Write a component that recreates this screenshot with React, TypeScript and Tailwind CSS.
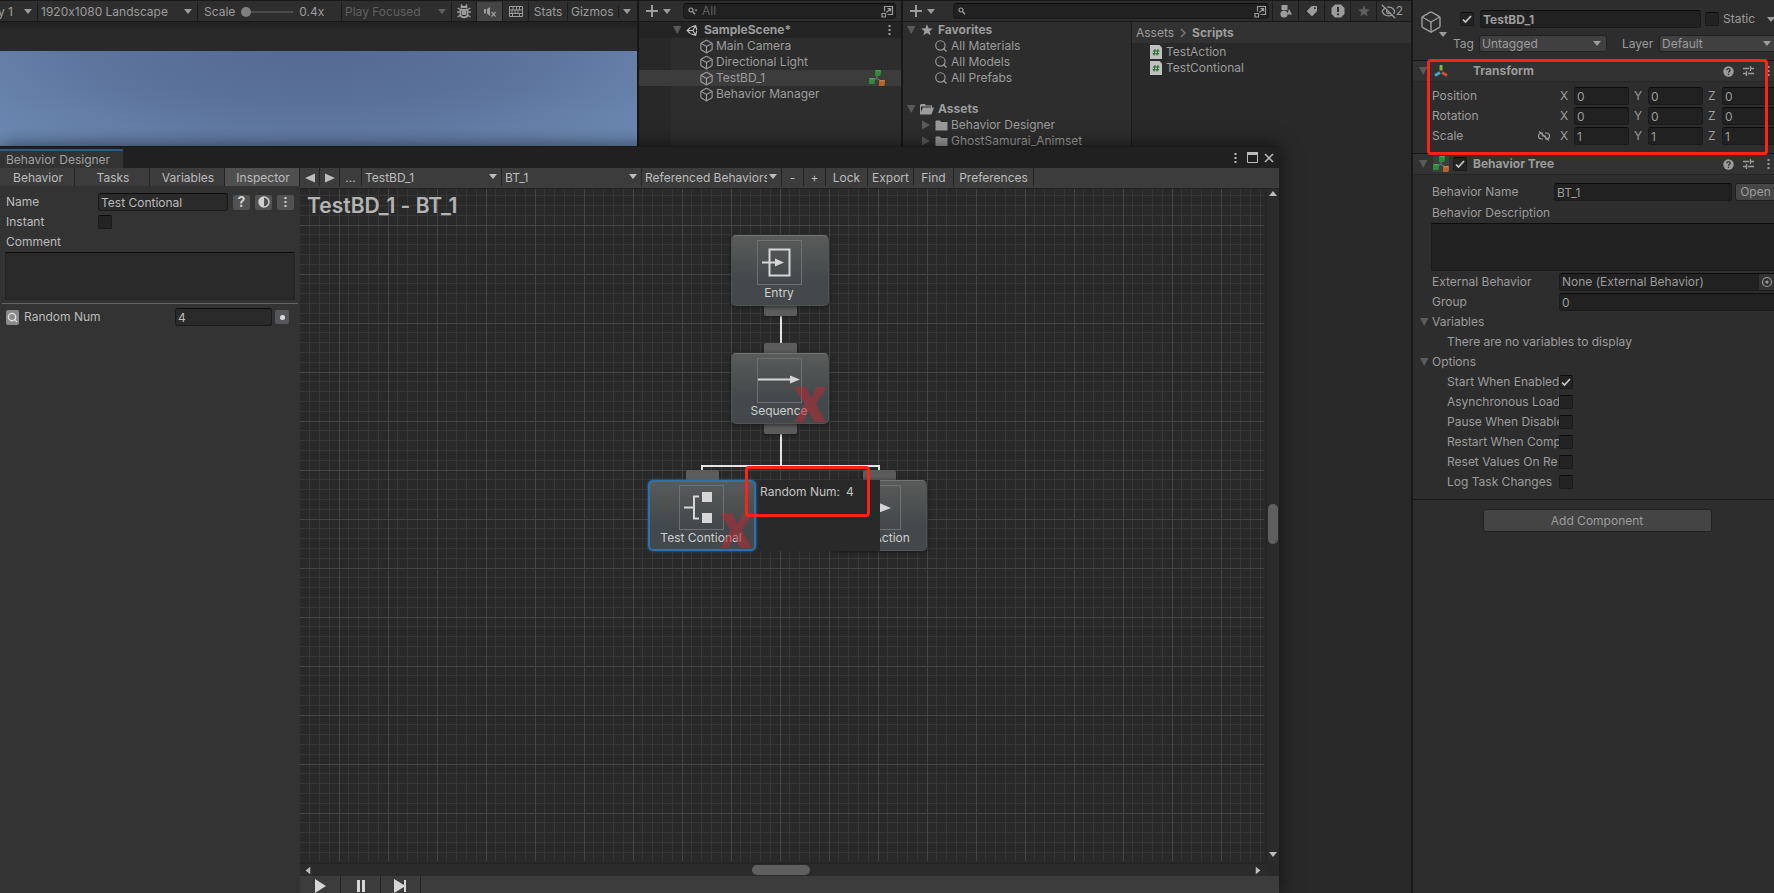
import type { ReactNode } from "react";
import { Box, EyeOff, Search } from "lucide-react";
import { FaTag, FaUnity } from "react-icons/fa";
import clsx from "clsx";

const transformRows = [
  { label: "Position", values: ["0", "0", "0"] },
  { label: "Rotation", values: ["0", "0", "0"] },
  { label: "Scale", values: ["1", "1", "1"] }
];

const behaviorOptions = [
  { label: "Start When Enabled", checked: true },
  { label: "Asynchronous Load", checked: false },
  { label: "Pause When Disable", checked: false },
  { label: "Restart When Comp", checked: false },
  { label: "Reset Values On Re", checked: false },
  { label: "Log Task Changes", checked: false }
];

const sceneObjects = ["Main Camera", "Directional Light", "TestBD_1", "Behavior Manager"];
const favorites = ["All Materials", "All Models", "All Prefabs"];
const folders = ["Behavior Designer", "GhostSamurai_Animset"];
const scripts = ["TestAction", "TestContional"];
const panelTabs = ["Behavior", "Tasks", "Variables", "Inspector"];

const field = "h-[18px] rounded-[3px] border border-[#1a1a1a] border-t-[#0c0c0c] bg-[#212121] px-[2px] outline-none";

/* Icons */

function Caret({ className }: { className?: string }) {
  return (
    <svg viewBox="0 0 8 5" className={clsx("h-[5px] w-2 shrink-0 fill-current", className)}>
      <path d="M0 0h8L4 5z" />
    </svg>
  );
}

function Fold({ open = true }: { open?: boolean }) {
  return (
    <svg viewBox="0 0 10 10" className="size-[10px] shrink-0 fill-[#5a5a5a]">
      <path d={open ? "M1 1h8.500L5.200 9z" : "M1 .5v9L9 5z"} />
    </svg>
  );
}

function Kebab({ className }: { className?: string }) {
  return (
    <svg viewBox="0 0 3 12" className={clsx("h-3 w-[3px] shrink-0 fill-current", className)}>
      <path d="M.5 1h2v2h-2zM.5 5h2v2h-2zM.5 9h2v2h-2z" />
    </svg>
  );
}

function PlusMenu() {
  return (
    <button aria-label="Create" className="flex items-center gap-[5px]">
      <svg viewBox="0 0 12 12" className="size-3 fill-current">
        <path d="M5 0h2v5h5v2H7v5H5V7H0V5h5z" />
      </svg>
      <Caret />
    </button>
  );
}

function OpenSearch() {
  return (
    <svg viewBox="0 0 13 13" className="size-[13px] shrink-0 fill-none stroke-current">
      <path d="M3.500 6.500v-5h8v8h-5M1 8.500h3.500V12H1zM5.500 7.500l4-4M6.500 3.500h3v3" strokeWidth="1.200" />
    </svg>
  );
}

function SmallSearch({ menu }: { menu?: boolean }) {
  return (
    <svg viewBox="0 0 10 8" className="h-2 w-[10px] shrink-0 fill-none stroke-current">
      <circle cx="3" cy="3" r="2" strokeWidth="1.200" />
      <path d="M4.500 4.500L7 7.200" strokeWidth="1.400" />
      {menu && <path d="M6.500 2.500h3L8 4.500z" className="fill-current stroke-none" />}
    </svg>
  );
}

function TreeIcon({ className }: { className?: string }) {
  return (
    <svg viewBox="0 0 16 16" className={clsx("size-4 shrink-0", className)}>
      <path d="M8 5v3.500M4 10l4-1.500 5 3" className="fill-none stroke-[#777]" />
      <path d="M6 1l1-1h5v4l-1 2H6z" fill="#2f8a3c" />
      <path d="M6 1l1-1h5l-1 1.500z" fill="#48a555" />
      <path d="M0 9l1-1h5v4l-1 2H0z" fill="#2f8a3c" />
      <path d="M0 9l1-1h5l-1 1.500z" fill="#48a555" />
      <path d="M10 11l1-1h5v4l-1 2h-5z" fill="#b5622b" />
      <path d="M10 11l1-1h5l-1 1.500z" fill="#d07c40" />
    </svg>
  );
}

function Folder() {
  return (
    <svg viewBox="0 0 13 11" className="h-[11px] w-[13px] shrink-0 fill-[#999]">
      <path d="M1 .5h4l1 1.500h6.500v8.500H.5V1z" />
    </svg>
  );
}

function Star({ className }: { className?: string }) {
  return (
    <svg viewBox="0 0 12 12" className={clsx("size-3 fill-current", className)}>
      <path d="M6 .3l1.600 3.900 4.200.3-3.200 2.700 1 4.100L6 9.100l-3.600 2.200 1-4.100L.2 4.500l4.200-.3z" />
    </svg>
  );
}

function HelpIcon() {
  return (
    <svg viewBox="0 0 11 11" className="size-[11px]">
      <circle cx="5.500" cy="5.500" r="5.200" className="fill-current" />
      <path d="M3.900 4.200c0-2.100 3.200-2.100 3.200 0 0 1.300-1.600 1.100-1.600 2.600M5.500 7.700v1.300" className="fill-none stroke-[#323232]" strokeWidth="1.300" />
    </svg>
  );
}

function PresetIcon() {
  return (
    <svg viewBox="0 0 11 10" className="h-[10px] w-[11px] fill-none stroke-current">
      <path d="M0 2.500h6M8 2.500h3M7.500 0v5M0 7.500h3M5 7.500h6M3.500 5v5" strokeWidth="1.300" />
    </svg>
  );
}

/* Shared controls */

function Check({ id, label, checked, className }: { id: string; label?: string; checked?: boolean; className?: string }) {
  return (
    <span className={clsx("relative block size-[14px] shrink-0", className)}>
      <input
        id={id}
        type="checkbox"
        aria-label={label}
        defaultChecked={checked}
        className="peer block size-[14px] appearance-none rounded-[2px] border border-[#1a1a1a] border-t-[#0c0c0c] bg-[#232323]"
      />
      <svg viewBox="0 0 14 14" className="pointer-events-none absolute inset-0 hidden fill-none stroke-[#c8c8c8] peer-checked:block">
        <path d="M3 7.500l2.500 2.500L11 4" strokeWidth="1.700" />
      </svg>
    </span>
  );
}

function Dropdown({ label, value, className, caret, pad }: { label: string; value: string; className?: string; caret?: string; pad?: string }) {
  return (
    <div className={clsx("relative", className)}>
      <select aria-label={label} className={clsx("block h-full w-full appearance-none bg-transparent pr-[14px] outline-none", pad ?? "pl-[3px]")}>
        <option>{value}</option>
      </select>
      <Caret className={clsx("pointer-events-none absolute top-1/2 -mt-[3px]", caret ?? "right-[5px]")} />
    </div>
  );
}

function ComponentHeader({ icon, title, toggle }: { icon: ReactNode; title: string; toggle?: boolean }) {
  return (
    <div className="flex h-[22px] items-center border-b border-t border-b-[#262626] border-t-[#171717] bg-[#323232] pl-[5px] pr-1">
      <Fold />
      <span className="ml-[5px] mr-1">{icon}</span>
      {toggle ? <Check id="tree-enabled" label={`${title} enabled`} checked /> : <span className="w-[14px]" />}
      <h2 className="ml-[6px] flex-1 font-bold">{title}</h2>
      <button aria-label="Help"><HelpIcon /></button>
      <button aria-label="Presets" className="ml-[9px]"><PresetIcon /></button>
      <button aria-label="More" className="ml-[13px]"><Kebab /></button>
    </div>
  );
}

/* Editor panels */

function GameView() {
  const cell = "flex h-full items-center border-r border-[#1c1c1c] shrink-0";
  return (
    <section className="flex min-w-0 flex-1 flex-col overflow-hidden bg-[#272727]">
      <div className="flex h-[22px] items-center whitespace-nowrap border-b border-t border-[#191919] bg-[#2e2e2e] pt-px">
        <button className={cell + " w-[38px] justify-between pr-[5px]"}>
          <span className="-ml-[2px]">y 1</span>
          <Caret />
        </button>
        <Dropdown label="Resolution" value="1920x1080 Landscape" className={cell + " w-[160px]"} />
        <label className={cell + " w-[144px] pl-[6px]"}>
          Scale
          <input
            type="range"
            defaultValue={0}
            className="ml-[6px] mr-[6px] h-[10px] w-[52px] appearance-none bg-[linear-gradient(#4c4c4c,#4c4c4c)] bg-[length:100%_2px] bg-center bg-no-repeat [&::-webkit-slider-thumb]:size-[10px] [&::-webkit-slider-thumb]:appearance-none [&::-webkit-slider-thumb]:rounded-full [&::-webkit-slider-thumb]:bg-[#808080]"
          />
          0.4x
        </label>
        <Dropdown label="Play mode" value="Play Focused" className={cell + " w-[110px] text-[#606060]"} caret="right-[5px]" />
        <button aria-label="Debug" className={cell + " w-[25px] justify-center"}>
          <svg viewBox="0 0 14 15" className="h-[15px] w-[14px] fill-none stroke-current">
            <path d="M4 .5l1.500 2M10 .5l-1.500 2M.5 4l3 1.500M13.500 4l-3 1.500M0 8h3.500M14 8h-3.500M.5 13l3-2M13.500 13l-3-2" strokeWidth="1.300" />
            <path d="M4.500 4.500V3h5v1.500M3.500 6h7v5c0 3-7 3-7 0z" strokeWidth="1.900" />
            <path d="M5.500 7.500h3v3h-3z" className="fill-current" />
          </svg>
        </button>
        <button aria-label="Mute audio" className={cell + " w-[26px] justify-center bg-[#454545]"}>
          <svg viewBox="0 0 12 10" className="h-[10px] w-3 fill-current">
            <path d="M0 2h2v4.500H0zM3 2l3-2v9L3 6.500z" />
            <path d="M7.500 5l4 4.500M11.500 5l-4 4.500" className="stroke-current" strokeWidth="1.200" />
          </svg>
        </button>
        <button aria-label="Shortcuts" className={cell + " w-[26px] justify-center"}>
          <svg viewBox="0 0 14 11" className="h-[11px] w-[14px] fill-none stroke-current">
            <path d="M.5.5h13v10H.5zM.5 4h13M.5 7.500h13M4 .5V4M7.500 .5V4M10.500 .5V4M3 4v3.500M6 4v3.500M9 4v3.500M3.500 7.500v3M10.500 7.500v3" />
          </svg>
        </button>
        <button className={cell + " w-[39px] justify-center"}>Stats</button>
        <button className="flex h-full shrink-0 items-center pl-[3px]">
          Gizmos
          <span className="ml-1 mr-1 h-3 w-px bg-[#1c1c1c]" />
          <Caret />
        </button>
      </div>
      <div className="h-[29px] bg-gradient-to-b from-[#212121] to-[#292929] to-30%" />
      <div className="h-[95px] bg-[radial-gradient(ellipse_at_50%_0%,#556a92,#5a7199_40%,#6e8bb5)]" />
    </section>
  );
}

function Hierarchy() {
  return (
    <section className="flex w-[264px] shrink-0 flex-col border-l-2 border-[#171717] bg-[#2d2d2d]">
      <div className="flex h-[22px] shrink-0 items-center border-b border-t border-[#191919] bg-[#2e2e2e] pl-[7px] pr-[5px]">
        <PlusMenu />
        <label className="ml-3 flex h-4 min-w-0 flex-1 items-center rounded-[4px] border border-[#1a1a1a] border-t-[#0c0c0c] bg-[#212121] pl-1 pr-px">
          <SmallSearch menu />
          <input aria-label="Search hierarchy" placeholder="All" className="ml-1 w-0 min-w-0 flex-1 bg-transparent outline-none placeholder:text-[#606060]" />
          <OpenSearch />
        </label>
      </div>
      <div className="flex h-4 shrink-0 items-center bg-[#242424] pl-[33px] pr-[10px]">
        <Fold />
        <FaUnity className="ml-1 size-[13px] text-[#c4c4c4]" />
        <span className="ml-[5px] flex-1 font-bold">SampleScene*</span>
        <Kebab />
      </div>
      <ul className="flex-1 bg-[linear-gradient(90deg,#282828_32px,#2d2d2d_32px)]">
        {sceneObjects.map((name) => (
          <li key={name} className={clsx("flex h-4 items-center pl-[60px] pr-4", name === "TestBD_1" && "bg-[#3c3c3c]")}>
            <Box className="size-[15px]" strokeWidth={1.8} />
            <span className="ml-[2px] flex-1">{name}</span>
            {name === "TestBD_1" && <TreeIcon />}
          </li>
        ))}
      </ul>
    </section>
  );
}

function Project() {
  const tool = "flex h-full items-center justify-center border-l border-[#1c1c1c]";
  return (
    <section className="flex w-[510px] shrink-0 flex-col border-l-2 border-[#171717] bg-[#2d2d2d]">
      <div className="flex h-[22px] shrink-0 items-center border-b border-t border-[#191919] bg-[#2e2e2e] pl-[7px]">
        <PlusMenu />
        <label className="ml-[18px] mr-[3px] flex h-4 min-w-0 flex-1 items-center rounded-[4px] border border-[#1a1a1a] border-t-[#0c0c0c] bg-[#212121] pl-1 pr-px">
          <SmallSearch />
          <input aria-label="Search project" className="w-0 min-w-0 flex-1 bg-transparent outline-none" />
          <OpenSearch />
        </label>
        <button aria-label="Filter by type" className={tool + " w-[26px]"}>
          <svg viewBox="0 0 12 13" className="h-[13px] w-3 fill-current">
            <path d="M1.500 0h6v5h-6zM9 4l3 5.500H7z" />
            <circle cx="4" cy="9" r="3.600" />
          </svg>
        </button>
        <button aria-label="Filter by label" className={tool + " w-[26px]"}><FaTag className="size-[10px] rotate-90" /></button>
        <button aria-label="Import log" className={tool + " w-[26px]"}>
          <svg viewBox="0 0 14 14" className="size-[14px] fill-current">
            <path d="M4 .5h6L13.500 4v6L10 13.500H4L.5 10V4z" />
            <path d="M6 3h2v5H6zM6 9.500h2v1.800H6z" fill="#2e2e2e" />
          </svg>
        </button>
        <button aria-label="Save search" className={tool + " w-[26px] text-[#5f5f5f]"}>
          <Star />
        </button>
        <button className={tool + " w-[35px] pr-1"}><EyeOff className="size-[15px]" strokeWidth={2} />2</button>
      </div>
      <div className="flex min-h-0 flex-1">
        <ul className="w-[229px] shrink-0 border-r border-[#1b1b1b]">
          <li className="flex h-4 items-center pl-[3px]">
            <Fold />
            <Star className="ml-[5px]" />
            <span className="ml-[5px] font-bold">Favorites</span>
          </li>
          {favorites.map((name) => (
            <li key={name} className="flex h-4 items-center pl-[31px]">
              <Search className="size-[14px]" strokeWidth={2} />
              <span className="ml-[3px]">{name}</span>
            </li>
          ))}
          <li className="mt-[15px] flex h-4 items-center pl-[3px]">
            <Fold />
            <svg viewBox="0 0 14 11" className="ml-1 h-[11px] w-[14px] fill-current">
              <path d="M0 1L1 0h4l1 1.500h6V4h-1V2.500H1V8l2-4.500h11L11.500 10.500H0z" />
            </svg>
            <span className="ml-1 font-bold">Assets</span>
          </li>
          {folders.map((name) => (
            <li key={name} className="flex h-4 items-center pl-[18px]">
              <Fold open={false} />
              <span className="ml-1 mr-[3px]"><Folder /></span>
              {name}
            </li>
          ))}
        </ul>
        <div className="flex-1 bg-[#292929]">
          <nav className="flex h-[21px] items-center bg-[#323232] pl-1">
            <a href="#assets">Assets</a>
            <svg viewBox="0 0 6 10" className="mx-[6px] h-[10px] w-[6px] fill-none stroke-[#777]">
              <path d="M1 1l4 4-4 4" strokeWidth="1.500" />
            </svg>
            <a href="#scripts" className="font-bold">Scripts</a>
          </nav>
          <ul className="pt-px">
            {scripts.map((name) => (
              <li key={name} className="flex h-4 items-center pl-[18px]">
                <svg viewBox="0 0 12 14" className="mr-1 h-[14px] w-3">
                  <path d="M0 0h9.500L12 2.500V14H0z" fill="#c0c0c0" />
                  <path d="M5 4L4 10.500M8 4l-1 6.500M2.800 6h6.700M2.500 8.700h6.700" stroke="#1f6b2b" strokeWidth="1.100" />
                </svg>
                {name}
              </li>
            ))}
          </ul>
        </div>
      </div>
    </section>
  );
}

function Inspector() {
  return (
    <aside className="relative w-[363px] shrink-0 overflow-hidden border-l-2 border-[#171717] bg-[#2d2d2d]">
      {/* Object header */}
      <header className="flex h-[60px] pl-[6px] pt-[10px]">
        <div className="relative w-[30px]">
          <Box className="size-6" strokeWidth={1.4} />
          <Caret className="absolute left-5 top-[22px]" />
        </div>
        <div className="flex-1">
          <div className="flex h-[18px] items-center">
            <Check id="active" label="Active" checked className="ml-[11px]" />
            <input aria-label="Object name" defaultValue="TestBD_1" className={field + " ml-[6px] mr-1 w-0 min-w-0 flex-1 font-bold"} />
            <Check id="static" />
            <label htmlFor="static" className="ml-1 w-[44px]">Static</label>
            <Caret className="mr-[-1px]" />
          </div>
          <div className="mt-[7px] flex h-[17px] items-center">
            <span className="ml-1 w-[26px]">Tag</span>
            <Dropdown label="Tag" value="Untagged" className="h-[17px] w-[128px] rounded-[3px] border border-[#222] bg-[#404040]" pad="pl-[2px]" />
            <span className="ml-[15px] w-[37px]">Layer</span>
            <Dropdown label="Layer" value="Default" className="-mr-1 h-[17px] flex-1 rounded-[3px] border border-[#222] bg-[#404040]" caret="right-[6px]" pad="pl-[2px]" />
          </div>
        </div>
      </header>

      {/* Transform */}
      <ComponentHeader
        title="Transform"
        icon={
          <svg viewBox="0 0 16 16" className="size-4 fill-none" strokeWidth="3">
            <path d="M8 7.500V2" stroke="#7fb53c" />
            <path d="M7 9.500L2 12.500" stroke="#4aa3c7" />
            <path d="M9 9.500l5 3" stroke="#c8502f" />
          </svg>
        }
      />
      <div className="-mr-[3px] pb-[7px] pl-[19px] pt-1">
        {transformRows.map((row) => (
          <div key={row.label} className="flex h-5 items-center">
            <span className="flex-1">{row.label}</span>
            {row.label === "Scale" && (
              <svg viewBox="0 0 12 10" className="mr-[10px] h-[10px] w-3 fill-none stroke-current">
                <path d="M5 2H3.500a3 3 0 000 6H5M7 2h1.500a3 3 0 010 6H7M4 5h4M1 .5l10 9" strokeWidth="1.200" />
              </svg>
            )}
            {["X", "Y", "Z"].map((axis, i) => (
              <label key={axis} className={clsx("flex items-center", i < 2 && "mr-[5px]")}>
                <span className="w-[14px]">{axis}</span>
                <input aria-label={`${row.label} ${axis}`} defaultValue={row.values[i]} className={field + " w-[55px]"} />
              </label>
            ))}
          </div>
        ))}
      </div>

      {/* Behavior tree */}
      <ComponentHeader title="Behavior Tree" toggle icon={<TreeIcon className="bg-[#3b3f40]" />} />
      <div className="-mr-2 pl-[19px] pt-[7px]">
        <div className="flex h-5 items-center">
          <label htmlFor="behavior-name" className="w-[122px]">Behavior Name</label>
          <input id="behavior-name" defaultValue="BT_1" className={field + " w-0 min-w-0 flex-1"} />
          <button className="ml-[3px] h-[18px] w-[47px] rounded-[3px] border border-[#1f1f1f] bg-[#464646] pr-[6px]">Open</button>
        </div>
        <label htmlFor="behavior-description" className="mt-px block h-5 leading-5">Behavior Description</label>
        <textarea id="behavior-description" className="-ml-px block h-12 w-full resize-none border border-[#1a1a1a] border-t-[#0c0c0c] bg-[#212121] outline-none" />
        <div className="mt-px flex h-5 items-center">
          <label htmlFor="external" className="w-[127px]">External Behavior</label>
          <div className={field + " flex min-w-0 flex-1 items-center pr-[7px]!"}>
            <input id="external" readOnly defaultValue="None (External Behavior)" className="w-0 min-w-0 flex-1 bg-transparent outline-none" />
            <svg viewBox="0 0 16 16" className="-mr-px size-4 bg-[#333]">
              <circle cx="8" cy="8" r="4.500" className="fill-none stroke-current" strokeWidth="1.200" />
              <circle cx="8" cy="8" r="1.600" className="fill-current" />
            </svg>
          </div>
        </div>
        <div className="flex h-5 items-center">
          <label htmlFor="group" className="w-[127px]">Group</label>
          <input id="group" defaultValue="0" className={field + " w-0 min-w-0 flex-1"} />
        </div>
      </div>
      <div className="pl-[6px]">
        <h3 className="flex h-5 items-center gap-[3px]"><Fold />Variables</h3>
        <p className="h-5 pl-7 leading-5">There are no variables to display</p>
        <h3 className="flex h-5 items-center gap-[3px]"><Fold />Options</h3>
        {behaviorOptions.map((option, i) => (
          <div key={option.label} className="flex h-5 items-center pl-7">
            <label htmlFor={`option-${i}`} className="w-28 overflow-hidden whitespace-nowrap">{option.label}</label>
            <Check id={`option-${i}`} checked={option.checked} />
          </div>
        ))}
      </div>
      <div className="-mr-[7px] mt-[7px] flex justify-center border-t border-[#171717] pt-[9px]">
        <button className="h-[23px] w-[229px] rounded-[3px] border border-[#222] bg-[#444]">Add Component</button>
      </div>

      <div className="pointer-events-none absolute left-[14px] right-[6px] top-[59px] h-[96px] rounded-[4px] border-[3px] border-[#fb2414]" />
    </aside>
  );
}

/* Behavior Designer window */

function TaskPanel() {
  const iconButton = "flex h-[15px] w-[17px] items-center justify-center rounded-[2px] bg-[#525252] text-[#d0d0d0]";
  return (
    <div className="flex w-[300px] shrink-0 flex-col bg-[#333]">
      <div className="grid h-[18px] grid-cols-4 bg-[#3c3c3c]">
        {panelTabs.map((tab) => (
          <button key={tab} className={clsx("border-r border-[#232323] pl-[2px] pt-[2px]", tab === "Inspector" && "bg-[#4f4f4f]")}>{tab}</button>
        ))}
      </div>
      <div className="px-[6px] pt-[6px]">
        <div className="flex h-5 items-center">
          <label htmlFor="task-name" className="w-[92px]">Name</label>
          <input id="task-name" defaultValue="Test Contional" className={field + " w-[130px] bg-[#2a2a2a]!"} />
          <button aria-label="Documentation" className={iconButton + " ml-[5px] text-[14px] font-bold"}>?</button>
          <button aria-label="Contrast" className={iconButton + " ml-[5px]"}>
            <svg viewBox="0 0 12 12" className="size-3">
              <circle cx="6" cy="6" r="5" className="fill-none stroke-current" strokeWidth="1.500" />
              <path d="M6 1a5 5 0 000 10z" className="fill-current" />
            </svg>
          </button>
          <button aria-label="Task menu" className={iconButton + " ml-[5px]"}><Kebab /></button>
        </div>
        <div className="flex h-5 items-center">
          <label htmlFor="instant" className="w-[92px]">Instant</label>
          <Check id="instant" />
        </div>
        <label htmlFor="comment" className="block h-5 leading-5">Comment</label>
      </div>
      <textarea id="comment" className="mx-[5px] h-12 resize-none border border-[#232323] border-t-[#0c0c0c] bg-[#2a2a2a] outline-none" />
      <div className="mx-[2px] mt-[3px] h-px bg-[#636363]" />
      <div className="flex h-[26px] items-center pl-[6px] pr-[11px]">
        <span className="flex h-[15px] w-[13px] items-center justify-center rounded-[2px] bg-[#8a8a8a] text-[#e0e0e0]">
          <Search className="size-[11px]" strokeWidth={3} />
        </span>
        <label htmlFor="random-num" className="ml-[5px] flex-1">Random Num</label>
        <input id="random-num" defaultValue="4" className={field + " w-[97px] bg-[#2a2a2a]!"} />
        <button aria-label="Bind variable" className="ml-[3px] flex size-[14px] items-center justify-center rounded-[2px] bg-[#55575a]">
          <span className="size-[5px] rounded-full bg-[#ddd]" />
        </button>
      </div>
    </div>
  );
}

function GraphToolbar() {
  const cell = "h-[18px] shrink-0 border-r border-[#232323] pt-[2px]";
  return (
    <div className="flex h-[21px] items-start overflow-hidden border-b border-[#232323] bg-[#3c3c3c]">
      <button aria-label="Back" className={cell + " flex w-5 items-center justify-center"}>
        <svg viewBox="0 0 10 10" className="size-[10px] fill-current"><path d="M10 .5v9L0 5z" /></svg>
      </button>
      <button aria-label="Forward" className={cell + " flex w-5 items-center justify-center"}>
        <svg viewBox="0 0 10 10" className="size-[10px] fill-current"><path d="M0 .5v9L10 5z" /></svg>
      </button>
      <button className={cell + " w-[22px]"}>...</button>
      <Dropdown label="Object" value="TestBD_1" className={cell + " w-[140px]"} caret="right-1" />
      <Dropdown label="Behavior" value="BT_1" className={cell + " w-[140px]"} caret="right-1" />
      <Dropdown label="Referenced" value="Referenced Behaviors" className={cell + " w-[140px]"} caret="right-1" />
      <button className={cell + " w-[22px]"}>-</button>
      <button className={cell + " w-[22px]"}>+</button>
      <button className={cell + " w-[42px]"}>Lock</button>
      <button className={cell + " w-[46px]"}>Export</button>
      <button className={cell + " w-10"}>Find</button>
      <button className={cell + " w-20"}>Preferences</button>
    </div>
  );
}

function TaskNode({ label, place, selected, failed, top, bottom, children }: {
  label: string;
  place: string;
  selected?: boolean;
  failed?: boolean;
  top?: boolean;
  bottom?: boolean;
  children: ReactNode;
}) {
  const stub = "absolute left-1/2 -ml-4 h-[11px] w-[33px] rounded-[2px] bg-[#5c5c5c] shadow-[0_1px_3px_#1118]";
  return (
    <div className={clsx("absolute h-[71px]", place)}>
      {top && <span className={stub + " -top-[10px]"} />}
      {bottom && <span className={stub + " -bottom-[10px]"} />}
      <div
        className={clsx(
          "relative flex h-full flex-col items-center rounded-[5px] bg-linear-to-b from-[#595b5a] to-[#43484a] to-65% pr-[2px]",
          selected
            ? "border-2 border-[#2f71ad] pt-[3px] shadow-[0_0_3px_#2f71ad]"
            : "border border-[#505354] border-t-[#737373] pt-[4px] shadow-[0_1px_4px_#111a]"
        )}
      >
        <div className="size-[45px] shrink-0 border border-[#6d6f70]">
          <svg viewBox="0 0 43 43" className="size-full fill-none stroke-[#d6d6d6]">{children}</svg>
        </div>
        <span className="whitespace-nowrap text-[#cfcfcf]">{label}</span>
        {failed && (
          <svg viewBox="0 0 32 35" className="absolute bottom-[1px] right-[2px] h-[35px] w-8 fill-[#b52b35] opacity-55">
            <path d="M0 0h12l5.500 11L22 0h10L22 17l10 18H20l-5.500-11.500L9 35H0l10.500-18z" />
          </svg>
        )}
      </div>
    </div>
  );
}

function Graph() {
  return (
    <div className="relative min-w-0 flex-1 overflow-hidden bg-[#292929]">
      <svg className="absolute inset-0 size-full" shapeRendering="crispEdges">
        <defs>
          <pattern id="grid" x="39" y="36" width="49" height="49" patternUnits="userSpaceOnUse">
            <path d="M9 0h1v49h-1zM19 0h1v49h-1zM29 0h1v49h-1zM39 0h1v49h-1zM0 9h49v1H0zM0 19h49v1H0zM0 29h49v1H0zM0 39h49v1H0z" fill="#363636" />
            <path d="M0 0h1v49H0zM0 0h49v1H0z" fill="#444" />
          </pattern>
        </defs>
        <rect width="100%" height="100%" fill="url(#grid)" />
        <path d="M481 115v50M481 235v42M402 283v-6h177v6" className="fill-none stroke-[#e4e4e4]" strokeWidth="2" />
      </svg>
      <h1 className="absolute left-[7px] top-1 text-[21px] font-semibold leading-[26px] text-[#b4b4b4]">TestBD_1 - BT_1</h1>

      <TaskNode label="Entry" place="left-[431px] top-[46px] w-[98px]" bottom>
        <path d="M11.500 8.500h20v26h-20z" strokeWidth="2" />
        <path d="M4 21.500h15" strokeWidth="2" />
        <path d="M17 17.500l9 4-9 4z" className="fill-[#d6d6d6]" stroke="none" />
      </TaskNode>
      <TaskNode label="Sequence" place="left-[431px] top-[164px] w-[98px]" top bottom failed>
        <path d="M0 20.500h35" strokeWidth="2" />
        <path d="M32 16.500l10 4-10 4z" className="fill-[#d6d6d6]" stroke="none" />
      </TaskNode>
      <TaskNode label="Test Action" place="left-[531px] top-[291px] w-[96px]" top>
        <path d="M8 11l26 11L8 32z" className="fill-[#d6d6d6]" stroke="none" />
      </TaskNode>
      <div className="absolute left-[456px] top-[291px] h-[71px] w-[124px] bg-[#292929] pl-1 pt-1 text-[#c4c4c4]">
        <span>Random Num:</span>
        <span className="ml-[6px]">4</span>
      </div>
      <TaskNode label="Test Contional" place="left-[348px] top-[291px] w-[108px]" top selected failed>
        <path d="M4 21.500h10M19 10.500h-5v22h5" strokeWidth="2" />
        <path d="M22 6h10v10H22zM22 27h10v10H22z" className="fill-[#d6d6d6]" stroke="none" />
      </TaskNode>
      <div className="pointer-events-none absolute left-[445px] top-[277px] h-[51px] w-[125px] rounded-[4px] border-[3px] border-[#fb2414]" />
    </div>
  );
}

function BehaviorDesigner() {
  return (
    <div className="absolute bottom-0 left-0 right-[132px] top-[146px] flex flex-col border-t border-[#1a1a1a] bg-[#333] text-[#bcbcbc] shadow-[0_0_18px_#0009]">
      <div className="flex h-[21px] shrink-0 items-end justify-between bg-[#202020] pr-[5px]">
        <div className="h-[19px] w-[123px] border-t-2 border-[#2c5d87] bg-[#333] pl-[6px] leading-[17px] text-[#a0a0a0]">Behavior Designer</div>
        <div className="flex h-full items-center gap-[10px]">
          <button aria-label="Window menu"><Kebab /></button>
          <button aria-label="Maximize">
            <svg viewBox="0 0 11 11" className="size-[11px] fill-none stroke-current"><path d="M.5 1.500h10v9H.5z" /><path d="M0 1.500h11" strokeWidth="3" /></svg>
          </button>
          <button aria-label="Close" className="-ml-1">
            <svg viewBox="0 0 10 10" className="size-[10px] fill-none stroke-current"><path d="M1 1l8 8M9 1L1 9" strokeWidth="1.500" /></svg>
          </button>
        </div>
      </div>
      <div className="flex min-h-0 flex-1">
        <TaskPanel />
        <div className="flex min-w-0 flex-1 flex-col">
          <GraphToolbar />
          <div className="flex min-h-0 flex-1 bg-[#292929]">
            <Graph />
            {/* Vertical scroll bar */}
            <div className="ml-[2px] flex w-[13px] flex-col items-center border-l border-[#232323] bg-[#2b2b2b] pb-1 pt-[2px]">
              <Caret className="rotate-180" />
              <div className="flex-[310] basis-0" />
              <div className="h-10 w-[10px] rounded-full bg-[#5f5f5f]" />
              <div className="flex-[311] basis-0" />
              <Caret />
            </div>
          </div>
          {/* Horizontal scroll bar */}
          <div className="bg-[#292929] pr-[13px] pt-[2px]">
            <div className="flex h-[13px] items-center border-t border-[#232323] bg-[#2b2b2b] px-1">
              <Caret className="rotate-90" />
              <div className="flex-[437] basis-0" />
              <div className="h-[10px] w-[58px] rounded-full bg-[#5f5f5f]" />
              <div className="flex-[441] basis-0" />
              <Caret className="-rotate-90" />
            </div>
          </div>
          <div className="flex h-[17px] bg-[#3c3c3c] pl-px text-[#d6d6d6]">
            {["Play", "Pause", "Step"].map((name) => (
              <button key={name} aria-label={name} className="flex w-10 items-center justify-center border-r border-[#232323] pt-[3px]">
                <svg viewBox="0 0 14 14" className="size-[14px] fill-current">
                  {name === "Play" && <path d="M1 0v14l11-7z" />}
                  {name === "Pause" && <path d="M3 1h3v12H3zM8 1h3v12H8z" />}
                  {name === "Step" && <path d="M0 0v14l10-6v5h2V1h-2v5z" />}
                </svg>
              </button>
            ))}
          </div>
        </div>
      </div>
    </div>
  );
}

export default function App() {
  return (
    <div className="flex h-screen overflow-hidden bg-[#292929] font-['Inter','Liberation_Sans',sans-serif] text-[12px] leading-4 text-[#9c9c9c] [font-feature-settings:'calt'_0]">
      <div className="relative flex min-w-0 flex-1">
        <GameView />
        <Hierarchy />
        <Project />
        <BehaviorDesigner />
      </div>
      <Inspector />
    </div>
  );
}
